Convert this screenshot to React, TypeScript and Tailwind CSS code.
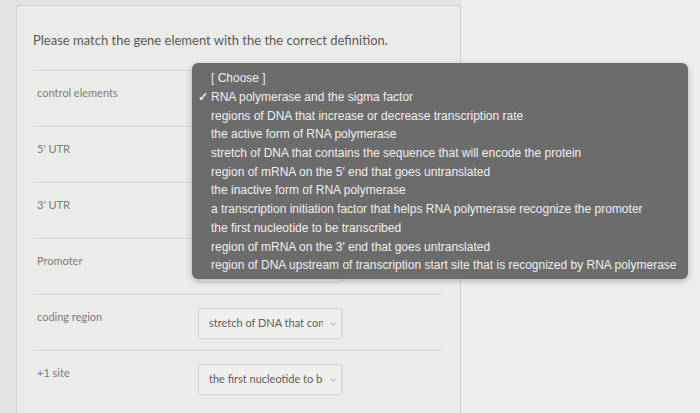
import React from 'react';

// values of the selects covered by the open menu are not visible in the picture
const rows = [
  { label: 'control elements', value: '' },
  { label: "5' UTR", value: '' },
  { label: "3' UTR", value: '' },
  { label: 'Promoter', value: '' },
  { label: 'coding region', value: 'stretch of DNA that contains the sequence that will encode the protein' },
  { label: '+1 site', value: 'the first nucleotide to be transcribed' },
];

const options = [
  '[ Choose ]',
  'RNA polymerase and the sigma factor',
  'regions of DNA that increase or decrease transcription rate',
  'the active form of RNA polymerase',
  'stretch of DNA that contains the sequence that will encode the protein',
  "region of mRNA on the 5\u2032 end that goes untranslated",
  'the inactive form of RNA polymerase',
  'a transcription initiation factor that helps RNA polymerase recognize the promoter',
  'the first nucleotide to be transcribed',
  "region of mRNA on the 3\u2032 end that goes untranslated",
  'region of DNA upstream of transcription start site that is recognized by RNA polymerase',
];

const Chevron = () => (
  <svg width="8" height="6" viewBox="0 0 8 6" className="shrink-0">
    <path d="M1.5 1.5 L4 4.2 L6.5 1.5" fill="none" stroke="#a2a2a2" strokeWidth="1" />
  </svg>
);

const SelectBox: React.FC<{ value: string }> = ({ value }) => (
  <div className="w-[144px] h-[31px] border border-[#d2d2d0] bg-[#efefed] rounded-[2px] flex items-center pl-[10px] pr-[4px]">
    <div className="flex-1 overflow-hidden whitespace-nowrap text-[11px] text-[#5e5e5e] mr-[6px]">{value}</div>
    <Chevron />
  </div>
);

export default function App() {
  return (
    <div
      className="relative w-[700px] h-[413px] overflow-hidden bg-[#e8e8e6] flex"
      style={{ fontFamily: 'Lato, "Open Sans", sans-serif' }}
    >
      <div className="w-[16px] shrink-0 bg-[#e5e5e3]" />
      <div className="w-[445px] shrink-0 flex flex-col">
        <div className="h-[6px] bg-[#e3e3e1] border-b border-[#cfcfcd]" />
        <div className="flex-1 border-l border-r border-[#d2d2d0] bg-[#ebebe9] pl-[16px] pr-[18px]">
          <p className="pt-[25px] pb-[20px] text-[13px] text-[#5a5a5a] leading-[19px]">
            Please match the gene element with the the correct definition.
          </p>
          {rows.map((row) => (
            <div key={row.label} className="h-[56px] border-t border-[#d6d6d4] flex">
              <div className="w-[165px] pl-[4px] pt-[14px] text-[11px] text-[#7c7c7c]">{row.label}</div>
              <div className="pt-[13px]">
                <SelectBox value={row.value} />
              </div>
            </div>
          ))}
        </div>
      </div>
      <div className="flex-1 bg-[#ededeb]" />

      <div
        className="absolute left-[192px] top-[63px] w-[496px] rounded-[6px] bg-[#6c6c6c] pt-[6px] pb-[4px] shadow-[0_2px_6px_rgba(0,0,0,0.25)]"
        style={{ fontFamily: '"Liberation Sans", Arial, sans-serif' }}
      >
        {options.map((opt, i) => (
          <div key={opt} className="h-[18.7px] flex items-center text-[12px] text-[#efefef] whitespace-nowrap">
            <span className="w-[19px] shrink-0 pl-[6px] text-[12px] font-bold">{i === 1 ? '✓' : ''}</span>
            <span>{opt}</span>
          </div>
        ))}
      </div>
    </div>
  );
}
